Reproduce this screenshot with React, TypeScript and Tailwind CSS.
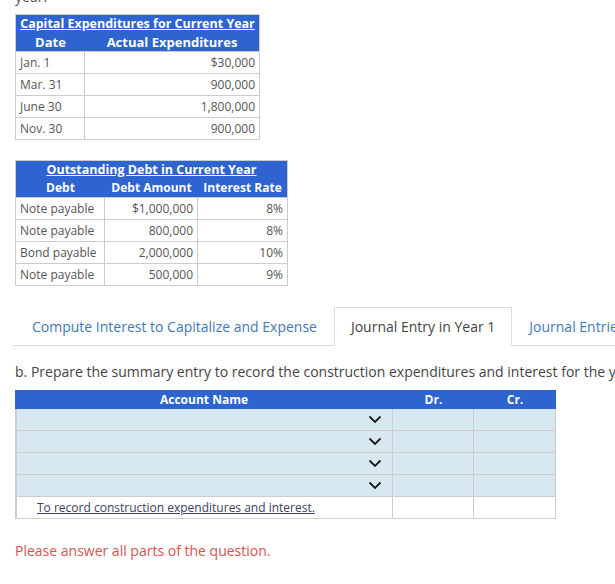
const expenditures = [
  { date: 'Jan. 1', amount: '$30,000' },
  { date: 'Mar. 31', amount: '900,000' },
  { date: 'June 30', amount: '1,800,000' },
  { date: 'Nov. 30', amount: '900,000' },
];

const debts = [
  { debt: 'Note payable', amount: '$1,000,000', rate: '8%' },
  { debt: 'Note payable', amount: '800,000', rate: '8%' },
  { debt: 'Bond payable', amount: '2,000,000', rate: '10%' },
  { debt: 'Note payable', amount: '500,000', rate: '9%' },
];

function Chevron() {
  return (
    <svg width="14" height="9" viewBox="0 0 14 9" fill="none">
      <path d="M1.5 1.5 L7 7 L12.5 1.5" stroke="#1a1a1a" strokeWidth="1.8" />
    </svg>
  );
}

export default function App() {
  return (
    <div className="w-[615px] h-[584px] overflow-hidden bg-white pl-[15px] font-['Open_Sans',sans-serif] text-[#555]">
      <div className="-mt-[13px] h-[21px] text-[14px] leading-[20px] text-[#555]">year.</div>

      {/* capital expenditures */}
      <div className="mt-[6px] w-[245px] border border-[#ccc] text-[12px]">
        <div className="bg-[#2d64cf] text-white font-bold whitespace-nowrap">
          <div className="h-[18px] leading-[18px] text-center text-[12.5px] underline">
            Capital Expenditures for Current Year
          </div>
          <div className="flex h-[18px] leading-[18px] text-[13px]">
            <div className="w-[69px] text-center">Date</div>
            <div className="flex-1 text-center">Actual Expenditures</div>
          </div>
        </div>
        {expenditures.map((r) => (
          <div key={r.date} className="flex h-[22px] leading-[21px] border-t border-[#ccc]">
            <div className="w-[69px] border-r border-[#ccc] px-[4px]">{r.date}</div>
            <div className="flex-1 px-[4px] text-right">{r.amount}</div>
          </div>
        ))}
      </div>

      {/* outstanding debt */}
      <div className="mt-[20px] w-[273px] border border-[#ccc] text-[12px]">
        <div className="bg-[#2d64cf] text-white font-bold whitespace-nowrap">
          <div className="h-[18px] leading-[18px] text-center text-[12.5px] underline">
            Outstanding Debt in Current Year
          </div>
          <div className="flex h-[18px] leading-[18px]">
            <div className="w-[89px] text-center">Debt</div>
            <div className="w-[93px] text-center">Debt Amount</div>
            <div className="flex-1 text-center">Interest Rate</div>
          </div>
        </div>
        {debts.map((r, i) => (
          <div key={i} className="flex h-[22px] leading-[21px] border-t border-[#ccc]">
            <div className="w-[89px] border-r border-[#ccc] px-[4px]">{r.debt}</div>
            <div className="w-[93px] border-r border-[#ccc] px-[4px] text-right">{r.amount}</div>
            <div className="flex-1 px-[4px] text-right">{r.rate}</div>
          </div>
        ))}
      </div>

      {/* tabs */}
      <div className="mt-[21px] -ml-[2px] flex whitespace-nowrap border-b border-[#ddd] text-[14px]">
        <div className="pl-[18px] pr-[16px] h-[38px] leading-[38px] text-[#3f79b9] border border-transparent">
          Compute Interest to Capitalize and Expense
        </div>
        <div className="px-[16px] h-[39px] leading-[38px] text-[#444] bg-white border border-[#ddd] border-b-white -mb-px">
          Journal Entry in Year 1
        </div>
        <div className="px-[16px] h-[38px] leading-[38px] text-[#3f79b9] border border-transparent">
          Journal Entries in Year 2
        </div>
      </div>

      <div className="mt-[16px] whitespace-nowrap text-[14px] leading-[20px] text-[#444]">
        b. Prepare the summary entry to record the construction expenditures and interest for the year.
      </div>

      {/* journal entry */}
      <div className="mt-[8px] w-[541px] text-[12px]">
        <div className="flex h-[19px] leading-[19px] bg-[#2d64cf] text-white font-bold">
          <div className="w-[378px] text-center">Account Name</div>
          <div className="w-[81px] text-center">Dr.</div>
          <div className="flex-1 text-center">Cr.</div>
        </div>
        <div className="border-l-2 border-r border-b border-[#ccc]">
          {[0, 1, 2, 3].map((i) => (
            <div key={i} className="flex h-[22px] bg-[#d7e8f1] border-b border-[#ccc]">
              <div className="w-[376px] flex items-center justify-end pr-[10px] border-r border-[#ccc]">
                <Chevron />
              </div>
              <div className="w-[81px] border-r border-[#ccc]"></div>
              <div className="flex-1"></div>
            </div>
          ))}
          <div className="flex h-[21px] bg-white">
            <div className="w-[376px] border-r border-[#ccc] pl-[20px] leading-[21px] text-[#3b4262] underline">
              To record construction expenditures and interest.
            </div>
            <div className="w-[81px] border-r border-[#ccc]"></div>
            <div className="flex-1"></div>
          </div>
        </div>
      </div>

      <div className="mt-[22px] text-[14px] leading-[20px] text-[#d9534f]">
        Please answer all parts of the question.
      </div>
    </div>
  );
}
